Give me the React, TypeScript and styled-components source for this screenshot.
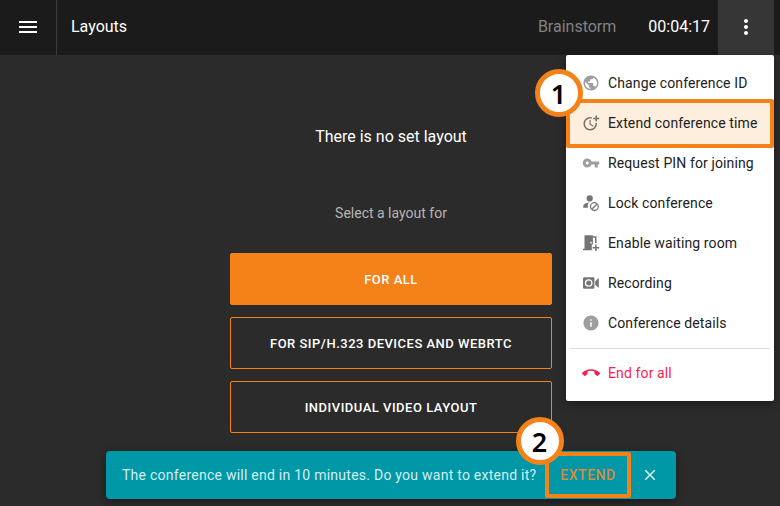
import React from "react";
import styled, { createGlobalStyle, css } from "styled-components";
import {
  MdCallEnd,
  MdClose,
  MdInfo,
  MdMenu,
  MdMoreTime,
  MdMoreVert,
  MdPublic,
  MdVpnKey,
} from "react-icons/md";

const orange = "#f58218";

const GlobalStyle = createGlobalStyle`
  * { box-sizing: border-box; }
  body {
    margin: 0;
    overflow: hidden;
    background: #2b2b2b;
    font-family: Roboto, "Liberation Sans", sans-serif;
  }
  button { font-family: inherit; cursor: pointer; }
`;

const Screen = styled.div`
  position: relative;
  display: flex;
  flex-direction: column;
  width: 780px;
  height: 506px;
  overflow: hidden;
  background: #2b2b2b;
  color: #fff;
`;

const TopBar = styled.header`
  display: flex;
  align-items: stretch;
  height: 55px;
  padding-right: 6px;
  flex: none;
  background: #1b1b1b;
`;

const BarButton = styled.button<{ $active?: boolean }>`
  display: flex;
  align-items: center;
  justify-content: center;
  width: 56px;
  padding: 0 0 1px;
  border: 0;
  color: #fff;
  background: ${(p) => (p.$active ? "#363636" : "transparent")};
`;

const Title = styled.h1`
  flex: 1;
  margin: 0;
  padding-left: 14px;
  border-left: 1px solid #3a3a3a;
  font-size: 16px;
  font-weight: 400;
  line-height: 54px;
`;

const BarText = styled.span<{ $muted?: boolean }>`
  margin-right: ${(p) => (p.$muted ? "32px" : "8px")};
  font-size: 16px;
  line-height: 54px;
  color: ${(p) => (p.$muted ? "#828282" : "#fff")};
`;

const Main = styled.main`
  display: flex;
  flex-direction: column;
  align-items: center;
  width: 782px;
  padding-top: 70px;
`;

const EmptyTitle = styled.h2`
  margin: 0 0 54px;
  font-size: 16px;
  font-weight: 400;
  line-height: 24px;
`;

const Hint = styled.p`
  margin: 0 0 30px;
  font-size: 14px;
  line-height: 20px;
  color: #b5b5b5;
`;

const ButtonList = styled.div`
  display: flex;
  flex-direction: column;
  gap: 12px;
`;

const LayoutButton = styled.button<{ $filled?: boolean }>`
  width: 322px;
  height: 52px;
  padding: 0;
  border: 1px solid ${orange};
  border-radius: 2px;
  background: ${(p) => (p.$filled ? orange : "transparent")};
  color: #fff;
  font-size: 13px;
  font-weight: 500;
  letter-spacing: 0.5px;
`;

const Menu = styled.nav`
  position: absolute;
  left: 566px;
  top: 55px;
  width: 208px;
  padding: 8px 0;
  border-radius: 2px;
  background: #fff;
  box-shadow: 0 3px 10px rgba(0, 0, 0, 0.35);
`;

const MenuItem = styled.div<{ $danger?: boolean; $selected?: boolean }>`
  display: flex;
  align-items: center;
  height: 40px;
  padding-left: 15px;
  font-size: 14px;
  letter-spacing: 0.12px;
  white-space: nowrap;
  color: ${(p) => (p.$danger ? "#fa1e4e" : "#212121")};
  ${(p) =>
    p.$selected &&
    css`
      position: relative;
      &::before {
        content: "";
        position: absolute;
        z-index: 0;
        inset: -4px 0 -5px;
        border: 4px solid ${orange};
        border-radius: 2px;
        background: #feeedd;
      }
    `}
`;

const MenuIcon = styled.span<{ $color: string }>`
  position: relative;
  display: flex;
  align-items: center;
  justify-content: center;
  width: 20px;
  height: 20px;
  margin-right: 7px;
  color: ${(p) => p.$color};
`;

const MenuLabel = styled.span`
  position: relative;
`;

const Separator = styled.hr`
  height: 1px;
  margin: 5px 4px 4px;
  border: 0;
  background: #dcdcdc;
`;

const Snackbar = styled.div`
  position: absolute;
  left: 106px;
  top: 451px;
  display: flex;
  align-items: center;
  width: 570px;
  height: 48px;
  padding-left: 16px;
  border-radius: 4px;
  background: #0097a7;
  box-shadow: 0 3px 8px rgba(0, 0, 0, 0.4);
`;

const Message = styled.span`
  width: 423px;
  font-size: 14px;
  letter-spacing: 0.25px;
  white-space: nowrap;
  color: #d3eef1;
`;

const ExtendButton = styled.button`
  width: 86px;
  height: 46px;
  padding: 0;
  border: 4px solid ${orange};
  border-radius: 2px;
  background: transparent;
  color: #dc8a3c;
  font-size: 14px;
  font-weight: 500;
  letter-spacing: 0.5px;
`;

const CloseButton = styled.button`
  display: flex;
  margin-left: 10px;
  padding: 0;
  border: 0;
  background: transparent;
  color: #e3f4f6;
`;

const StepBadge = styled.span<{ $x: number; $y: number }>`
  position: absolute;
  left: ${(p) => p.$x}px;
  top: ${(p) => p.$y}px;
  display: flex;
  align-items: center;
  justify-content: center;
  width: 48px;
  height: 48px;
  padding-top: 2px;
  border: 5px solid ${orange};
  border-radius: 50%;
  background: #fff;
  color: #000;
  font: 600 27px/36px "Noto Sans", sans-serif;
`;

const PersonBlockedIcon = () => (
  <svg width="18" height="18" viewBox="0 0 18 18" fill="none">
    <circle cx="7.7" cy="4.4" r="3.1" fill="currentColor" />
    <path d="M1.2 13.8v-1.4c0-2.2 2.4-3.5 5.8-3.8-1.1 1.3-1.6 3.1-1 5.2H1.2Z" fill="currentColor" />
    <circle cx="12.4" cy="12.6" r="3.9" stroke="currentColor" strokeWidth="1.3" />
    <path d="m9.8 15.2 5.2-5.2" stroke="currentColor" strokeWidth="1.3" />
  </svg>
);

const DoorPlusIcon = () => (
  <svg width="18" height="18" viewBox="0 0 18 18" fill="none">
    <path
      fillRule="evenodd"
      d="M2.5 1.3h8.4v15H1v-1.5h1.5V1.3Zm5.8 6.5v1.8h1.4V7.8H8.3Z"
      fill="currentColor"
    />
    <path d="M10.5 3h3.3v6" stroke="currentColor" strokeWidth="1.5" />
    <path d="M9.8 10.5h2.4v6H9.8z" fill="#fff" />
    <path d="M13.9 10.5v6.6M10.6 13.8H17.2" stroke="currentColor" strokeWidth="1.5" />
  </svg>
);

const RecordingIcon = () => (
  <svg width="18" height="18" viewBox="0 0 18 18" fill="none">
    <rect x="1" y="3.3" width="11.4" height="11.4" rx="1.3" fill="currentColor" />
    <path d="m13.2 7.2 3.6-3.2v10l-3.6-3.2V7.2Z" fill="currentColor" />
    <circle cx="6.7" cy="9" r="3.2" stroke="#fff" strokeWidth="1.3" />
  </svg>
);

const menuItems = [
  { label: "Change conference ID", icon: <MdPublic size={18} />, color: "#9e9e9e" },
  { label: "Extend conference time", icon: <MdMoreTime size={18} />, color: "#77706a", selected: true },
  { label: "Request PIN for joining", icon: <MdVpnKey size={18} />, color: "#9e9e9e" },
  { label: "Lock conference", icon: <PersonBlockedIcon />, color: "#757575" },
  { label: "Enable waiting room", icon: <DoorPlusIcon />, color: "#757575" },
  { label: "Recording", icon: <RecordingIcon />, color: "#757575" },
  { label: "Conference details", icon: <MdInfo size={18} />, color: "#9e9e9e" },
];

export default function App() {
  return (
    <>
      <GlobalStyle />
      <Screen>
        <TopBar>
          <BarButton aria-label="Menu">
            <MdMenu size={24} />
          </BarButton>
          <Title>Layouts</Title>
          <BarText $muted>Brainstorm</BarText>
          <BarText>00:04:17</BarText>
          <BarButton $active aria-label="More">
            <MdMoreVert size={24} />
          </BarButton>
        </TopBar>
        <Main>
          <EmptyTitle>There is no set layout</EmptyTitle>
          <Hint>Select a layout for</Hint>
          <ButtonList>
            <LayoutButton $filled>FOR ALL</LayoutButton>
            <LayoutButton>FOR SIP/H.323 DEVICES AND WEBRTC</LayoutButton>
            <LayoutButton>INDIVIDUAL VIDEO LAYOUT</LayoutButton>
          </ButtonList>
        </Main>
        <Menu>
          {menuItems.map((item) => (
            <MenuItem key={item.label} $selected={item.selected}>
              <MenuIcon $color={item.color}>{item.icon}</MenuIcon>
              <MenuLabel>{item.label}</MenuLabel>
            </MenuItem>
          ))}
          <Separator />
          <MenuItem $danger>
            <MenuIcon $color="#fa1e4e">
              <MdCallEnd size={18} />
            </MenuIcon>
            <MenuLabel>End for all</MenuLabel>
          </MenuItem>
        </Menu>
        <Snackbar>
          <Message>The conference will end in 10 minutes. Do you want to extend it?</Message>
          <ExtendButton>EXTEND</ExtendButton>
          <CloseButton aria-label="Close">
            <MdClose size={18} />
          </CloseButton>
        </Snackbar>
        <StepBadge $x={534.6} $y={69.3}>1</StepBadge>
        <StepBadge $x={515.6} $y={417}>2</StepBadge>
      </Screen>
    </>
  );
}
